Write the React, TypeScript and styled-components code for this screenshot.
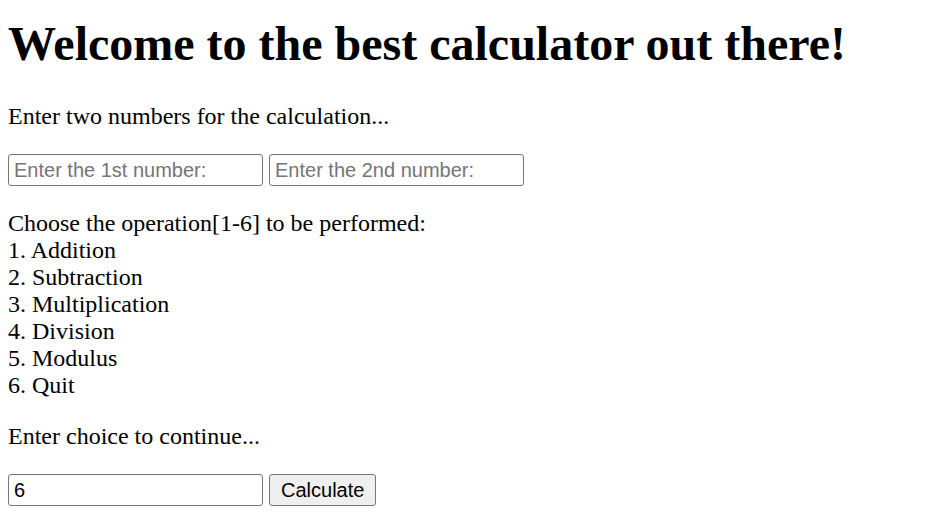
import React from "react";
import styled, { createGlobalStyle } from "styled-components";

const GlobalStyle = createGlobalStyle`
  body {
    margin: 0;
    background: #ffffff;
    color: #000000;
    font-family: "Liberation Serif", "Times New Roman", serif;
    font-size: 24px;
  }
`;

const Page = styled.div`
  padding: 16px 8px 0;
`;

const Title = styled.h1`
  margin: 0;
  font-size: 48px;
  line-height: 55px;
  font-weight: bold;
`;

const Text = styled.p<{ $top: number }>`
  margin: ${(p) => p.$top}px 0 0;
  line-height: 27px;
`;

const Row = styled.div<{ $top: number }>`
  display: flex;
  gap: 6px;
  margin-top: ${(p) => p.$top}px;
`;

const NumberInput = styled.input`
  box-sizing: border-box;
  width: 255px;
  height: 32px;
  margin: 0;
  padding: 0 5px;
  border: 1px solid #767676;
  border-radius: 3px;
  font-family: "Liberation Sans", Arial, sans-serif;
  font-size: 20px;
  color: #000000;
  background: #ffffff;

  &::placeholder {
    color: #757575;
  }
`;

const Button = styled.button`
  box-sizing: border-box;
  height: 32px;
  margin: 0;
  padding: 0 11px;
  border: 1px solid #767676;
  border-radius: 3px;
  background: #efefef;
  font-family: "Liberation Sans", Arial, sans-serif;
  font-size: 20px;
  color: #000000;
`;

const operations = [
  "Addition",
  "Subtraction",
  "Multiplication",
  "Division",
  "Modulus",
  "Quit",
];

function App() {
  return (
    <Page>
      <GlobalStyle />
      <Title>Welcome to the best calculator out there!</Title>
      <Text $top={32}>Enter two numbers for the calculation...</Text>
      <Row $top={24}>
        <NumberInput type="text" placeholder="Enter the 1st number:" />
        <NumberInput type="text" placeholder="Enter the 2nd number:" />
      </Row>
      <Text $top={24}>
        Choose the operation[1-6] to be performed:
        {operations.map((op, i) => (
          <React.Fragment key={op}>
            <br />
            {i + 1}. {op}
          </React.Fragment>
        ))}
      </Text>
      <Text $top={24}>Enter choice to continue...</Text>
      <Row $top={24}>
        <NumberInput type="text" defaultValue="6" />
        <Button type="button">Calculate</Button>
      </Row>
    </Page>
  );
}

export default App;
